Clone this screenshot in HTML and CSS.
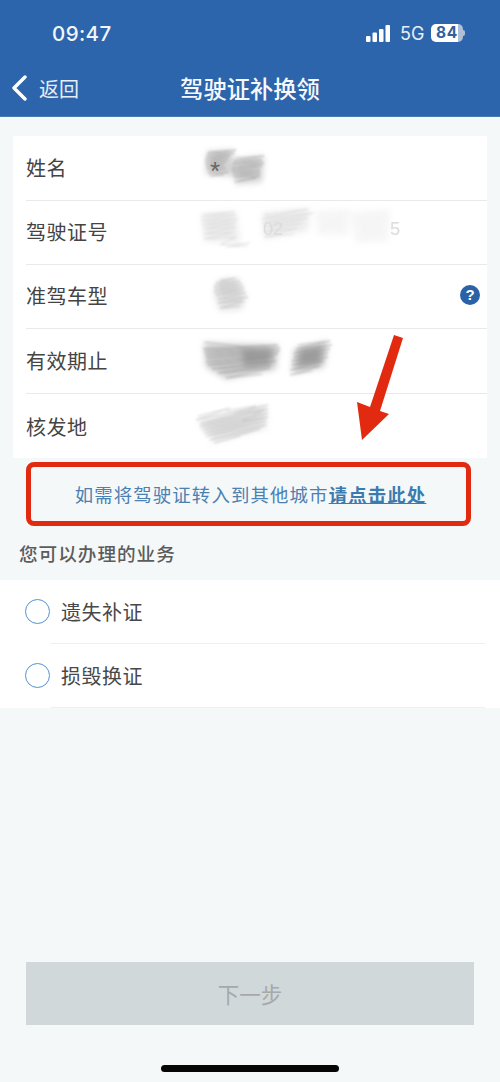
FILE: index.html
```html
<!DOCTYPE html>
<html lang="zh-CN">
<head>
<meta charset="utf-8">
<title>驾驶证补换领</title>
<link rel="stylesheet" href="styles.css">
</head>
<body>
<div class="page">
  <header class="header">
    <div class="status">
      <span class="time">09:47</span>
      <div class="status-right">
        <svg class="signal" width="24" height="17" viewBox="0 0 24 17"><rect x="0" y="11" width="4.5" height="6" rx="1"/><rect x="6.5" y="7.5" width="4.5" height="9.5" rx="1"/><rect x="13" y="4" width="4.5" height="13" rx="1"/><rect x="19.5" y="0" width="4.5" height="17" rx="1"/></svg>
        <span class="net">5G</span>
        <span class="battery">84</span>
        <span class="nub"></span>
      </div>
    </div>
    <nav class="nav">
      <div class="back">
        <svg class="chevron" width="16" height="26" viewBox="0 0 16 26"><path d="M14 2 L3 13 L14 24"/></svg>
        <span>返回</span>
      </div>
      <h1 class="title">驾驶证补换领</h1>
    </nav>
  </header>

  <main class="main">
    <section class="card">
      <div class="row">
        <span class="label">姓名</span>
        <div class="value">
          <svg class="scribble" width="300" height="64" viewBox="0 0 300 64">
            <path class="haze" fill="#b5b5b5" d="M17 16 L44 14 L42 24 L74 20 L72 46 L46 48 L44 40 L16 38 Z"/>
            <g class="soft" stroke="#8f8f8f" stroke-width="1" fill="none" opacity=".5">
              <path d="M18 16 L46 14 L17 18 L44 17 L16 21 L40 20 L15 24 L38 23 L15 27 L36 26 L16 30 L34 29 L17 33 L36 32 L18 37 L38 36 L20 40 L34 39"/>
              <path d="M46 22 L74 20 L44 25 L72 24 L43 28 L74 27 L42 32 L72 30 L42 35 L70 34 L43 38 L70 37 L44 41 L70 40 L45 46 L66 42"/>
            </g>
          </svg>
          <span class="star">*</span>
        </div>
      </div>
      <div class="row">
        <span class="label">驾驶证号</span>
        <div class="value">
          <span class="faint-num">02</span>
          <span class="faint-num last">5</span>
          <svg class="scribble" width="300" height="64" viewBox="0 0 300 64">
            <path class="haze" fill="#e2e2e2" d="M12 14 L46 10 L50 42 L14 40 Z M72 12 L120 7 L118 30 L74 38 Z"/>
            <path class="haze" fill="#f0f0f0" d="M125 10 L160 8 L158 34 L128 34 Z M160 12 L200 8 L198 40 L166 42 Z"/>
            <g class="soft" stroke="#d4d4d4" stroke-width="1.2" fill="none" opacity=".6">
              <path d="M12 13 L44 11 L10 16 L46 14 L11 20 L48 18 L12 24 L46 22 L13 28 L46 26 L14 33 L44 31 L14 38 L46 36 L30 44 L60 42 L36 46 L58 45"/>
              <path d="M74 14 L118 8 L72 18 L124 12 L72 22 L118 17 L74 26 L112 22 L74 31 L108 27 L74 36 L104 33"/>
            </g>
          </svg>
        </div>
      </div>
      <div class="row">
        <span class="label">准驾车型</span>
        <div class="value">
          <svg class="scribble" width="300" height="64" viewBox="0 0 300 64">
            <path class="haze" fill="#d2d2d2" d="M28 15 L48 13 L56 33 L52 44 L30 46 L24 28 Z"/>
            <g class="soft" stroke="#b4b4b4" stroke-width="1" fill="none" opacity=".6">
              <path d="M30 15 L46 13 L26 18 L50 16 L24 21 L52 19 L24 24 L54 22 L24 27 L54 25 L26 30 L56 28 L28 34 L58 32 L28 38 L54 36 L30 43 L50 41"/>
            </g>
          </svg>
          <span class="help">?</span>
        </div>
      </div>
      <div class="row">
        <span class="label">有效期止</span>
        <div class="value">
          <svg class="scribble" width="300" height="64" viewBox="0 0 300 64">
            <path class="haze" fill="#a9a9a9" d="M14 14 L88 16 L86 40 L36 50 L16 38 Z M104 20 L138 12 L134 38 L102 44 Z"/>
            <path class="haze" fill="#8a8a8a" d="M52 20 L82 20 L80 36 L54 38 Z M110 20 L132 18 L130 34 L108 38 Z"/>
            <g class="soft" stroke="#7d7d7d" stroke-width="1" fill="none" opacity=".4">
              <path d="M14 13 L56 18 L13 20 L88 16 L14 23 L90 19 L15 26 L90 22 L16 29 L88 25 L16 33 L84 28 L18 36 L86 32 L22 40 L80 36 L28 44 L80 39 L36 49 L72 45"/>
              <path d="M108 16 L140 12 L106 20 L142 16 L104 24 L140 20 L104 28 L138 24 L102 32 L138 28 L102 36 L134 32 L100 41 L130 37 L100 46 L122 42"/>
            </g>
          </svg>
        </div>
      </div>
      <div class="row">
        <span class="label">核发地</span>
        <div class="value">
          <svg class="scribble" width="300" height="64" viewBox="0 0 300 64">
            <path class="haze" fill="#d5d5d5" d="M8 26 L76 12 L76 34 L24 48 Z"/>
            <g class="soft" stroke="#a8a8a8" stroke-width="1" fill="none" opacity=".45">
              <path d="M8 22 L40 14 L6 26 L78 11 L10 30 L78 15 L10 33 L78 19 L12 36 L78 23 L14 39 L76 27 L16 42 L76 31 L20 46 L70 35 L24 49 L50 42"/>
              <path d="M36 17 L66 12 L44 20 L76 15 L52 27 L76 23"/>
            </g>
          </svg>
        </div>
      </div>
    </section>

    <div class="notice">
      <span class="notice-text">如需将驾驶证转入到其他城市<a class="notice-link">请点击此处</a></span>
    </div>

    <h2 class="section-title">您可以办理的业务</h2>

    <section class="list">
      <div class="option"><span class="radio"></span><span class="option-text">遗失补证</span></div>
      <div class="option"><span class="radio"></span><span class="option-text">损毁换证</span></div>
    </section>

    <div class="actions">
      <button class="next" type="button">下一步</button>
    </div>
    <div class="home-wrap"><span class="home-bar"></span></div>
  </main>

  <svg class="arrow" width="60" height="110" viewBox="0 0 60 110"><polygon points="39,0 48,3 25,76 34,79 7,105 2,67 15,72"/></svg>
</div>
</body>
</html>
```

FILE: styles.css
```css
* { box-sizing: border-box; }
html, body { margin: 0; padding: 0; }
body {
  font-family: "Noto Sans CJK SC", "Noto Sans", sans-serif;
  background: #f5f8f9;
  color: #444;
}
.page {
  position: relative;
  width: 500px;
  height: 1082px;
  overflow: hidden;
  display: flex;
  flex-direction: column;
  background: #f5f8f9;
}
.header {
  height: 117px;
  background: #2c65ab;
  color: #fff;
  border-bottom: 1px solid #4b7aae;
  flex: none;
}
.status {
  height: 66px;
  padding: 0 35px 0 52px;
  display: flex;
  align-items: center;
  justify-content: space-between;
}
.time {
  font-family: Inter, "Liberation Sans", sans-serif;
  font-size: 20.5px;
  font-weight: 500;
  letter-spacing: .4px;
  color: #f2f6fb;
}
.status-right { display: flex; align-items: center; }
.signal { fill: #fff; margin-right: 10px; }
.net {
  font-family: Inter, "Liberation Sans", sans-serif;
  font-size: 18px;
  color: #e8eef6;
  margin-right: 9px;
  width: 22px;
  white-space: nowrap;
}
.battery {
  width: 32px;
  height: 18px;
  border-radius: 5px;
  background: linear-gradient(90deg, #fff 0, #fff 84%, #aebfd6 84%, #aebfd6 100%);
  color: #34609a;
  font-family: Inter, "Liberation Sans", sans-serif;
  font-size: 15.5px;
  font-weight: 700;
  line-height: 18px;
  letter-spacing: .8px;
  text-align: center;
}
.nub {
  width: 2px;
  height: 6px;
  border-radius: 0 2px 2px 0;
  background: #aebfd6;
}
.nav {
  height: 44px;
  display: grid;
  grid-template-columns: 1fr auto 1fr;
  align-items: center;
}
.back {
  display: flex;
  align-items: center;
  padding-left: 11px;
  font-size: 20px;
  color: #e6edf6;
  grid-column: 1;
  grid-row: 1;
}
.chevron { fill: none; stroke: #fff; stroke-width: 3.4; stroke-linecap: round; stroke-linejoin: round; margin-right: 12px; }
.title {
  margin: 0;
  font-size: 23.3px;
  font-weight: 500;
  color: #f5f8fc;
  line-height: 44px;
  grid-column: 2;
}
.main { flex: 1; display: flex; flex-direction: column; padding-top: 19px; }
.card {
  height: 322px;
  margin: 0 13px;
  background: #fff;
  display: flex;
  flex-direction: column;
}
.row {
  height: 64px;
  flex: none;
  margin-left: 13px;
  padding-bottom: 2px;
  display: flex;
  align-items: center;
  border-bottom: 1px solid #e7eaea;
}
.row:first-child { height: 65px; }
.row:nth-child(4) { height: 65px; }
.row:last-child { padding-bottom: 0; border-bottom: 0; }
.label {
  width: 164px;
  flex: none;
  font-size: 20px;
  letter-spacing: .5px;
  color: #444;
}
.value {
  position: relative;
  flex: 1;
  height: 100%;
}
.scribble { position: absolute; left: 0; top: 0; overflow: visible; }
.soft { filter: blur(.9px); }
.haze { filter: blur(3px); opacity: .6; }
.star {
  position: absolute;
  left: 20px;
  top: 20px;
  font-family: "Liberation Sans", sans-serif;
  font-size: 26px;
  color: #666;
}
.faint-num {
  position: absolute;
  left: 73px;
  top: 18px;
  font-family: "Liberation Sans", sans-serif;
  font-size: 18px;
  color: #dcdcdc;
}
.faint-num.last { left: 200px; }
.help {
  position: absolute;
  right: 7px;
  top: 20px;
  width: 20px;
  height: 20px;
  border-radius: 50%;
  background: #2a62a8;
  color: #fff;
  font-family: "Liberation Sans", sans-serif;
  font-size: 15px;
  font-weight: 700;
  line-height: 20px;
  text-align: center;
}
.notice {
  height: 64px;
  margin: 4px 29px 0 26px;
  padding-left: 4px;
  border: 5px solid #e12a10;
  border-radius: 8px;
  display: flex;
  align-items: center;
  justify-content: center;
}
.notice-text {
  font-size: 18.4px;
  letter-spacing: 1.15px;
  color: #4a80b2;
  white-space: nowrap;
}
.notice-link {
  font-weight: 700;
  color: #3b7bb0;
  text-decoration: underline;
}
.section-title {
  margin: 13px 0 0;
  padding-left: 19px;
  height: 41px;
  font-size: 18.6px;
  font-weight: 500;
  letter-spacing: 1px;
  line-height: 28px;
  color: #5c5c5c;
}
.list { background: #fff; height: 128px; flex: none; }
.option {
  height: 64px;
  position: relative;
  display: flex;
  align-items: center;
  padding: 0 0 1px 25px;
}
.option::after {
  content: "";
  position: absolute;
  left: 50px;
  right: 15px;
  bottom: 0;
  height: 1px;
  background: #eff1f1;
}
.radio {
  width: 25px;
  height: 25px;
  border-radius: 50%;
  border: 1.7px solid #5591d3;
  margin-right: 11px;
  flex: none;
}
.option-text { font-size: 20px; letter-spacing: .5px; color: #484848; }
.actions { margin-top: auto; padding: 0 26px; }
.next {
  display: block;
  width: 448px;
  height: 63px;
  border: 0;
  border-radius: 0;
  background: #d0d8da;
  color: #a5a9aa;
  font-family: inherit;
  font-size: 21.5px;
}
.home-wrap {
  height: 57px;
  padding-top: 40px;
  display: flex;
  justify-content: center;
}
.home-bar {
  width: 178px;
  height: 7px;
  border-radius: 4px;
  background: #060606;
}
.arrow {
  position: absolute;
  left: 355px;
  top: 335px;
  fill: #e12a10;
}
```
